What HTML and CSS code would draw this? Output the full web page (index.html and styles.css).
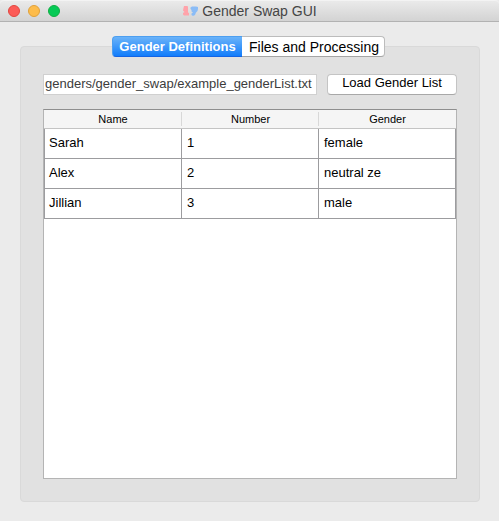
FILE: index.html
```html
<!DOCTYPE html>
<html lang="en">
<head>
<meta charset="utf-8">
<title>Gender Swap GUI</title>
<link rel="stylesheet" href="styles.css">
</head>
<body>
<div class="window">
  <header class="titlebar">
    <div class="lights">
      <button class="light close" aria-label="Close"></button>
      <button class="light minimize" aria-label="Minimize"></button>
      <button class="light zoom" aria-label="Zoom"></button>
    </div>
    <h1 class="title">
      <svg class="logo" viewBox="0 0 16 12" width="16" height="12" aria-hidden="true">
        <path fill="#ffa3aa" d="M2 1H5.5L6 2V7.5L7 8V10.5H2L1 9.5V8L2.5 7L1 5.5L1.5 3Z"/>
        <path fill="#8bbcf6" d="M10 1.5H14L16 2V4L15.5 6L14 7.5L13 10L11 11L9.5 10V8.5L11 7.5L9.5 6.5V5L8.5 4V2.5Z"/>
      </svg>
      <span>Gender Swap GUI</span>
    </h1>
  </header>
  <main class="content">
    <div class="tabs" role="tablist">
      <button class="tab selected" role="tab" aria-selected="true">Gender Definitions</button>
      <button class="tab" role="tab" aria-selected="false">Files and Processing</button>
    </div>
    <section class="panel">
      <div class="loader">
        <input class="path" type="text" aria-label="Gender list file" value="genders/gender_swap/example_genderList.txt">
        <button class="load">Load Gender List</button>
      </div>
      <div class="grid-frame">
        <table class="genders">
          <thead>
            <tr><th scope="col">Name</th><th scope="col">Number</th><th scope="col">Gender</th></tr>
          </thead>
          <tbody>
            <tr><td>Sarah</td><td>1</td><td>female</td></tr>
            <tr><td>Alex</td><td>2</td><td>neutral ze</td></tr>
            <tr><td>Jillian</td><td>3</td><td>male</td></tr>
          </tbody>
        </table>
      </div>
    </section>
  </main>
</div>
</body>
</html>
```
FILE: styles.css
```css
* { box-sizing: border-box; }

body {
  margin: 0;
  background: #ebebeb;
  color: #000;
  font: 13px/16px "Liberation Sans", Arial, sans-serif;
}

button, input { font: inherit; color: inherit; margin: 0; }

.window {
  display: flex;
  flex-direction: column;
  min-height: 100vh;
}

.titlebar {
  display: grid;
  grid-template-columns: 1fr auto 1fr;
  align-items: center;
  height: 22px;
  padding: 0 8px;
  border-top: 1px solid #f3f3f3;
  border-bottom: 1px solid #b2b2b2;
  border-radius: 4px 4px 0 0;
  background: linear-gradient(#eaeaea, #d3d3d3);
}

.lights { display: flex; gap: 8px; }

.light {
  width: 12px;
  height: 12px;
  padding: 0;
  border: 1px solid;
  border-radius: 50%;
}

.close { background: #fc5b57; border-color: #e2463f; }
.minimize { background: #fdbc4b; border-color: #e0a13a; }
.zoom { background: #06ca56; border-color: #10ae43; }

.title {
  display: flex;
  align-items: center;
  gap: 4px;
  margin: 0;
  color: #454545;
  font-size: 14px;
  font-weight: 400;
}

.content {
  display: flex;
  flex: 1;
  flex-direction: column;
  padding: 14px 19px 19px 20px;
}

.tabs {
  display: flex;
  z-index: 1;
  align-self: center;
  margin: 0 3px -11px 0;
}

.tab {
  height: 21px;
  padding: 0 5px 0 7px;
  border: 1px solid #bcbcbc;
  border-bottom-color: #a5a5a5;
  border-left: 0;
  border-radius: 0 4px 4px 0;
  background: #fff;
  font-size: 14px;
  flex: 0 0 143px;
}

.tab.selected {
  flex-basis: 130px;
  padding: 0 6px;
  border: 1px solid #4d9ff0;
  border-bottom-color: #1464e4;
  border-right: 0;
  border-radius: 4px 0 0 4px;
  background: linear-gradient(#6ab3f9, #127dfb);
  color: #fff;
  font-size: 13px;
  font-weight: 700;
}

.panel {
  display: flex;
  flex: 1;
  flex-direction: column;
  gap: 14px;
  padding: 27px 22px 22px;
  border: 1px solid #d9d9d9;
  border-radius: 4px;
  background: #e1e1e1;
}

.loader {
  display: flex;
  gap: 10px;
}

.path {
  flex: 1;
  min-width: 0;
  height: 21px;
  padding: 0 1px 2px;
  border: 1px solid #d0d0d0;
  background: #fff;
  color: #3c3c3c;
}

.load {
  flex: 0 0 130px;
  height: 21px;
  padding: 0 0 3px;
  border: 1px solid #c4c4c4;
  border-bottom-color: #a8a8a8;
  border-radius: 4px;
  background: #fff;
}

.grid-frame {
  flex: 1;
  border: 1px solid #b4b4b4;
  border-top-color: #8e8e8e;
  background: #fff;
}

.genders {
  width: 100%;
  border-spacing: 0;
  table-layout: fixed;
}

.genders th {
  height: 19px;
  padding: 0;
  border-bottom: 1px solid #c4c4c4;
  background: linear-gradient(#d8d8d8, #d8d8d8) right 2px / 1px 14px no-repeat #f5f5f5;
  font-size: 11px;
  font-weight: 400;
  line-height: 14px;
}

.genders th:first-child { width: 138px; }

.genders th:last-child { background: #f5f5f5; }

.genders td {
  height: 30px;
  padding: 0 5px 2px;
  border-right: 1px solid #9c9c9f;
  border-bottom: 1px solid #9c9c9f;
}

.genders td:first-child {
  padding-left: 4px;
  border-left: 1px solid #9c9c9f;
}
```
